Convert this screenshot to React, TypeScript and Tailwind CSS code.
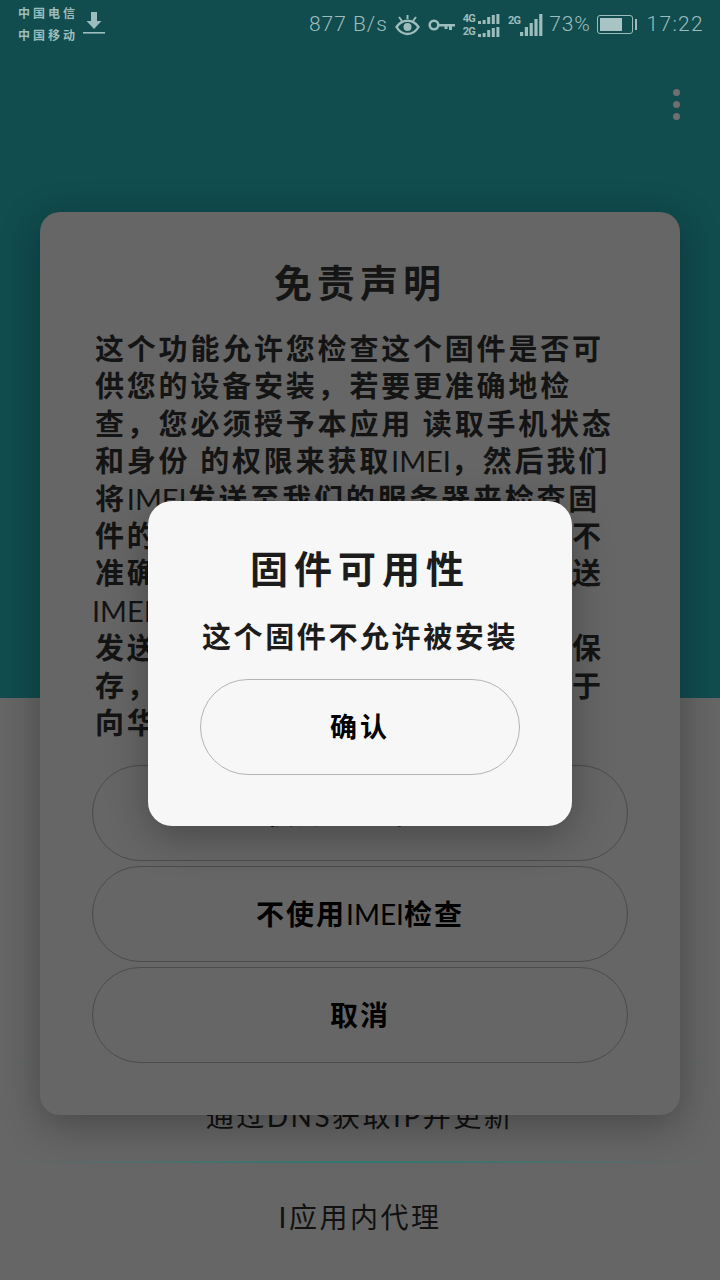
const disclaimer = [
  "这个功能允许您检查这个固件是否可",
  "供您的设备安装，若要更准确地检",
  "查，您必须授予本应用 读取手机状态",
  "和身份 的权限来获取IMEI，然后我们",
  "将IMEI发送至我们的服务器来检查固",
  "件的可用性。如果您拒绝授权结果不",
  "准确。如果您同意，应用将向其发送",
  "IMEI。我们不会将您的",
  "发送给第三方，也不会在服务器上保",
  "存，这些信息仅用于检查固件，用于",
  "向华为公司提交任何数据。",
];

function Imei() {
  return <span className="font-normal tracking-[0px]">IMEI</span>;
}

function withImei(line: string) {
  const parts = line.split("IMEI");
  return parts.map((part, i) => (
    <span key={i}>
      {i > 0 && <Imei />}
      {part}
    </span>
  ));
}

function DownloadIcon() {
  return (
    <svg width="22" height="24" viewBox="0 0 22 24" fill="#9dbcbc">
      <path d="M8 1h6v9h4.500L11 18 3.500 10H8z" />
      <rect x="0" y="21" width="22" height="1.600" />
    </svg>
  );
}

function EyeIcon() {
  return (
    <svg width="25" height="22" viewBox="0 0 25 22" fill="none" stroke="#9dbcbc" strokeWidth="2.400">
      <path d="M1.500 13C4.500 8.500 8 6.800 12.500 6.800S20.500 8.500 23.500 13C20.500 18 17 20 12.500 20S4.500 18 1.500 13Z" />
      <circle cx="12.500" cy="13" r="4" fill="#9dbcbc" stroke="none" />
      <path d="M12.500 1v4M4 3l3 4M21 3l-3 4" strokeWidth="2" />
    </svg>
  );
}

function KeyIcon() {
  return (
    <svg width="27" height="14" viewBox="0 0 27 14" fill="none" stroke="#9dbcbc">
      <circle cx="6" cy="7" r="4.300" strokeWidth="2.600" />
      <path d="M10 6h17v2.400h-3V12h-3V8.400h-1.500V11h-3V8.400H10z" fill="#9dbcbc" stroke="none" />
    </svg>
  );
}

function Bars({ heights, width }: { heights: number[]; width: number }) {
  const max = Math.max(...heights);
  return (
    <svg width={width} height={max} viewBox={`0 0 ${width} ${max}`} fill="#9dbcbc">
      {heights.map((h, i) => (
        <rect key={i} x={i * (width / heights.length)} y={max - h} width={width / heights.length - 1.600} height={h} />
      ))}
    </svg>
  );
}

function SimRow({ label }: { label: string }) {
  return (
    <div className="flex h-[11px] items-end gap-[3px]">
      <span className="text-[11px] leading-[11px] font-bold tracking-[-0.800px] font-['Roboto',sans-serif]">{label}</span>
      <Bars heights={[3, 4, 7, 9, 10]} width={23} />
    </div>
  );
}

function StatusBar() {
  return (
    <div className="flex h-[48px] items-center justify-between pl-[18px] pr-[16px] pt-[1px] text-[#9dbcbc]">
      <div className="flex items-center gap-[5px]">
        <div className="flex flex-col gap-[6px] pt-[1px] text-[12px] leading-[16px] font-bold tracking-[3px]">
          <span>中国电信</span>
          <span>中国移动</span>
        </div>
        <div className="-mt-[3px]">
          <DownloadIcon />
        </div>
      </div>
      <div className="flex items-center font-['Roboto',sans-serif] text-[21px] font-light">
        <span className="tracking-[1px]">877 B/s</span>
        <div className="ml-[7px]">
          <EyeIcon />
        </div>
        <div className="ml-[8px]">
          <KeyIcon />
        </div>
        <div className="ml-[8px] flex flex-col gap-[2px]">
          <SimRow label="4G" />
          <SimRow label="2G" />
        </div>
        <div className="ml-[7px] flex items-start">
          <span className="mt-[1px] text-[11px] leading-[11px] font-bold tracking-[-0.800px]">2G</span>
          <Bars heights={[4, 9, 13, 17, 22]} width={24} />
        </div>
        <span className="ml-[5px] tracking-[0.800px]">73%</span>
        <div className="ml-[7px] flex items-center gap-[2px]">
          <div className="flex h-[19px] w-[36px] rounded-[3px] border border-[#9dbcbc] p-[2px]">
            <div className="h-full w-[73%] bg-[#a9c4c4]" />
          </div>
          <div className="h-[11px] w-[2px] bg-[#9dbcbc]" />
        </div>
        <span className="ml-[9px] tracking-[1.300px]">17:22</span>
      </div>
    </div>
  );
}

function OutlineButton({ children }: { children: React.ReactNode }) {
  return (
    <div className="flex h-[96px] items-center justify-center rounded-full border border-[#4c4c4c] text-[28px] font-bold tracking-[2px] text-black">
      {children}
    </div>
  );
}

function Separator({ strong }: { strong?: boolean }) {
  return (
    <div
      className={
        strong
          ? "h-[2px] bg-gradient-to-r from-transparent via-[#2f7a74] to-transparent"
          : "h-[2px] bg-gradient-to-r from-transparent via-[#6d6d6d] to-transparent"
      }
    />
  );
}

function ListRow({ label, last }: { label: string; last?: boolean }) {
  return (
    <div className="flex h-[100px] flex-col">
      <div className="flex flex-1 items-center justify-center pt-[7px] text-[28px] tracking-[2.500px] text-[#111]">{label}</div>
      {!last && <Separator strong={label.startsWith("通过")} />}
    </div>
  );
}

export default function App() {
  return (
    <div className="relative flex h-[1280px] w-[720px] flex-col overflow-hidden bg-[#666666] font-['Lato','Noto_Sans_CJK_SC',sans-serif]">
      <div className="h-[698px] bg-[#114c4e]">
        <StatusBar />
        <div className="mt-[41px] flex flex-col items-end gap-[5px] pr-[40px]">
          <div className="h-[7px] w-[7px] rounded-full bg-[#6f6f6f]" />
          <div className="h-[7px] w-[7px] rounded-full bg-[#6f6f6f]" />
          <div className="h-[7px] w-[7px] rounded-full bg-[#6f6f6f]" />
        </div>
      </div>

      <div className="pt-[65px]">
        <ListRow label="检查固件" />
        <ListRow label="更新设置" />
        <ListRow label="通过DNS获取" />
        <ListRow label="通过DNS获取IP并更新" />
        <ListRow label="I应用内代理" last />
      </div>

      {/* disclaimer dialog */}
      <div className="absolute left-[40px] top-[212px] h-[903px] w-[640px] rounded-[20px] bg-[#666666] shadow-[0_10px_40px_rgba(0,0,0,0.3)]">
        <div className="pt-[45px] text-center text-[38px] leading-[50px] font-bold tracking-[5px] text-[#151515]">免责声明</div>
        <div className="mt-[23px] pl-[55px] text-[29px] leading-[37.400px] font-bold tracking-[2.800px] whitespace-nowrap text-[#141414]">
          {disclaimer.map((line) => (
            <div key={line} className={line.startsWith("IMEI") ? "-ml-[3px]" : ""}>
              {withImei(line)}
            </div>
          ))}
        </div>
        <div className="mt-[24px] flex flex-col gap-[5px] px-[52px]">
          <OutlineButton>使用IMEI检查</OutlineButton>
          <OutlineButton>
            <span>
              不使用
              <Imei />
              检查
            </span>
          </OutlineButton>
          <OutlineButton>取消</OutlineButton>
        </div>
      </div>

      {/* availability dialog */}
      <div className="absolute left-[148px] top-[501px] h-[325px] w-[424px] rounded-[24px] bg-[#f7f7f7] shadow-[0_10px_40px_rgba(0,0,0,0.3)]">
        <div className="pt-[42px] text-center text-[38px] leading-[50px] font-bold tracking-[6px] text-[#1c1c1c]">固件可用性</div>
        <div className="mt-[25px] text-center text-[29px] leading-[38px] font-bold tracking-[2.600px] text-[#1c1c1c]">这个固件不允许被安装</div>
        <div className="mx-auto mt-[23px] flex h-[96px] w-[320px] items-center justify-center rounded-full border border-[#b4b4b4] text-[27px] font-bold tracking-[3px] text-black">
          确认
        </div>
      </div>
    </div>
  );
}
